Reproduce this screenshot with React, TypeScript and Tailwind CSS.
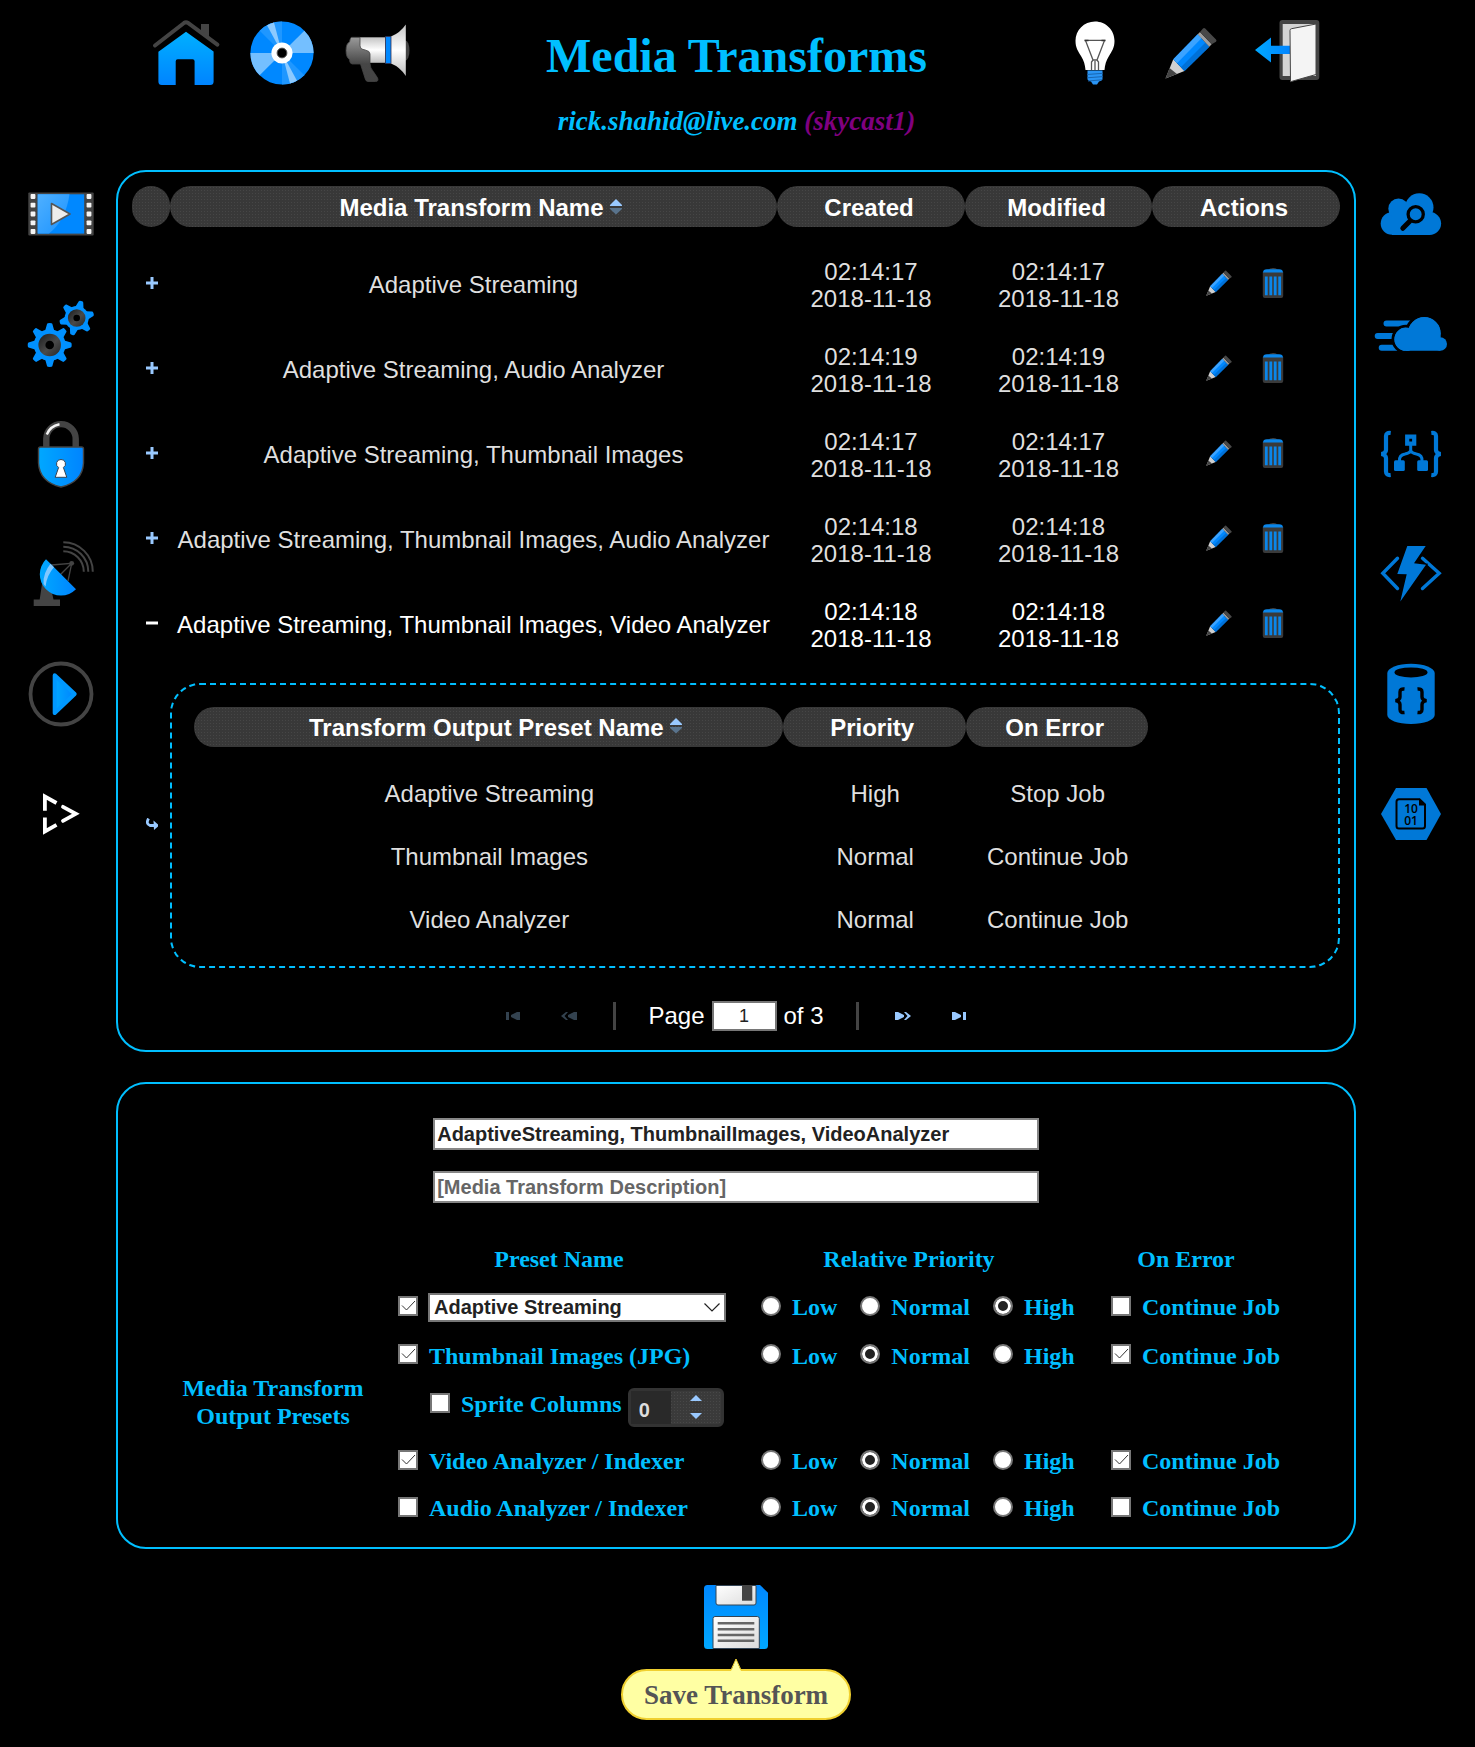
import React from "react";

const SVG_CLASS = "block size-16 overflow-visible";

function Gradients() {
  return (
    <svg className="absolute size-0" aria-hidden="true">
      <defs>
        <linearGradient id="blueDown" x1="0" y1="0" x2="0" y2="1">
          <stop offset="0" stopColor="#00b0ff" />
          <stop offset="1" stopColor="#0084ff" />
        </linearGradient>
        <linearGradient id="blueUp" x1="0" y1="1" x2="0" y2="0">
          <stop offset="0" stopColor="#00a8ff" />
          <stop offset="1" stopColor="#0088ff" />
        </linearGradient>
        <linearGradient id="blueRight" x1="0" y1="0" x2="1" y2="0">
          <stop offset="0" stopColor="#00a8ff" />
          <stop offset="1" stopColor="#0084ff" />
        </linearGradient>
        <linearGradient id="silver" x1="0" y1="0" x2="0" y2="1">
          <stop offset="0" stopColor="#c4c4c4" />
          <stop offset="0.5" stopColor="#ffffff" />
          <stop offset="1" stopColor="#bdbdbd" />
        </linearGradient>
        <linearGradient id="steel" x1="0" y1="0" x2="0" y2="1">
          <stop offset="0" stopColor="#9a9a9a" />
          <stop offset="0.6" stopColor="#464646" />
          <stop offset="1" stopColor="#444444" />
        </linearGradient>
        <linearGradient id="plate" x1="0" y1="0" x2="1" y2="1">
          <stop offset="0" stopColor="#ffffff" />
          <stop offset="1" stopColor="#dcdcdc" />
        </linearGradient>
        <linearGradient id="hub" x1="0" y1="0" x2="1" y2="1">
          <stop offset="0" stopColor="#1c1c1c" />
          <stop offset="0.55" stopColor="#4a4a4a" />
          <stop offset="1" stopColor="#262626" />
        </linearGradient>
        <linearGradient id="gloss" x1="0" y1="0" x2="1" y2="1">
          <stop offset="0" stopColor="#4fb0ff" />
          <stop offset="1" stopColor="#1a92ff" />
        </linearGradient>
      </defs>
    </svg>
  );
}

function HomeIcon() {
  return (
    <svg viewBox="0 0 64 64" className={SVG_CLASS} aria-hidden="true">
      <path d="M47 3h8v14l-8-6z" fill="#444" />
      <path d="M1 24.5 30 2q2-1.4 4 0l29.4 21.6" fill="none" stroke="#444" strokeWidth="4" strokeLinecap="round" />
      <path d="M32 10.7 59.6 30.5V60.5a3.5 3.5 0 0 1-3.5 3.5H40.6V40.3a2 2 0 0 0-2-2H23.7a2 2 0 0 0-2 2V64H8a3.5 3.5 0 0 1-3.6-3.5V30.7z" fill="url(#blueDown)" />
    </svg>
  );
}

function DiscIcon() {
  return (
    <svg viewBox="0 0 64 64" className={SVG_CLASS} aria-hidden="true">
      <circle cx="32" cy="32" r="31.6" fill="#0088ff" />
      <path d="M32 32 54.3 9.7A31.6 31.6 0 0 1 63.6 32z" fill="#74bfff" />
      <path d="M32 32 9.7 54.3A31.6 31.6 0 0 1 .4 32z" fill="#74bfff" />
      <path d="M32 32 9.7 9.7A31.6 31.6 0 0 1 32 .4z" fill="#1f97ff" />
      <path d="M32 32 54.3 54.3A31.6 31.6 0 0 1 32 63.6z" fill="#1f97ff" />
      <path d="M32 32 17 4.2A31.6 31.6 0 0 1 24 1.5z" fill="#8ccaff" />
      <path d="M32 32 47 59.8A31.6 31.6 0 0 1 40 62.5z" fill="#8ccaff" />
      <circle cx="32" cy="32" r="10.6" fill="#fff" />
      <circle cx="32" cy="32" r="4.9" fill="#000" stroke="#555" strokeWidth="1" />
    </svg>
  );
}

function MegaphoneIcon() {
  return (
    <svg viewBox="0 0 64 64" className={SVG_CLASS} aria-hidden="true">
      <ellipse cx="59.5" cy="29.5" rx="4" ry="10" fill="#444" />
      <path d="M14 16.3H39.5V41.8H14z" fill="url(#silver)" />
      <path d="M45 15.5Q54 12 59.8 3.5V55Q54 46 45 42.5z" fill="url(#silver)" />
      <path d="M39.500 15.5h5.500v27H39.500z" fill="#0088ff" stroke="#335" strokeWidth=".8" />
      <path d="M5.500 16.300H14v8q0 4 5 4.600 5 1 5 4V42.300q0 5 3.500 8.500l4 6q1.500 3.700-2 3.700h-7.500q-2 0-2.700-2.500L14.500 43H6q-2.500-.5-2.500-4.500-3.500-2-3.500-9t3.500-8.500q.5-4 2-4.700z" fill="url(#steel)" stroke="#444" strokeWidth=".8" />
    </svg>
  );
}

function BulbIcon() {
  return (
    <svg viewBox="0 0 64 64" className={SVG_CLASS} aria-hidden="true">
      <path d="M32 .4c11 0 19.500 8.600 19.500 19.300 0 7-2.500 10.300-5.500 15.300-3 4.500-4 9-4.500 14h-19c-.5-5-1.500-9.500-4.500-14-3-5-5.500-8.300-5.500-15.300C12.500 9 21 .4 32 .4z" fill="#fff" />
      <path d="M22.500 19.400h19L34 39h-4zM28.500 49V41l1.500-2h4l1.500 2v8M32 40v9" fill="none" stroke="#555" strokeWidth="1.300" />
      <path d="M21.500 19.400h4M38.500 19.400h4" stroke="#333" strokeWidth="1.500" />
      <path d="M24.500 49.500h15v9q-1 1.500-3.500 2l-2 3h-4l-2-3q-2.500-.5-3.500-2z" fill="#2a94f4" />
      <path d="M24 53.500l16-1.200M24 56.800l16-1.200M25 60l14-1.200" stroke="#1560a8" strokeWidth=".9" />
    </svg>
  );
}

function PencilIcon({ small = false }: { small?: boolean }) {
  return (
    <svg viewBox="0 0 64 64" className={small ? "block size-8" : SVG_CLASS} aria-hidden="true">
      <path d="M14.300 38.300 25.500 50 6.500 57.500z" fill="#d0d0d0" />
      <path d="M10.500 47 18 53 6.500 57.500z" fill="#444" />
      <path d="M14.300 38.300 38.700 13.300 50.300 25.700 25.500 50z" fill="#0088ff" />
      <path d="M14.300 38.300 38.700 13.300 42.500 17.300 18 42.200z" fill="#3ba3ff" />
      <path d="M21.800 46.200 46.500 21.600 50.300 25.700 25.500 50z" fill="#0071d8" />
      <path d="M38.700 13.300 41 11 52.700 23.300 50.300 25.700z" fill="#a0a0a0" />
      <path d="M41 11 44 7.500q1-1 2.200 0L57 18.500q1 1 0 2.200L52.700 23.300z" fill="#484848" />
    </svg>
  );
}

function ExitIcon() {
  return (
    <svg viewBox="0 0 64 64" className={SVG_CLASS} aria-hidden="true">
      <rect x="24.500" y="-1" width="39.800" height="60" rx="3" fill="#444" />
      <path d="M27.700 3H61V55H27.700z" fill="#d4d4d4" />
      <path d="M0 29 16 16.500v8.200h19V33H16v8.500z" fill="url(#blueRight)" />
      <path d="M35 9.500q0-1.500 1.500-1.800L61 3V53.500L35.500 60.700z" fill="#f4f4f4" stroke="#444" strokeWidth="1" />
    </svg>
  );
}

function FilmIcon() {
  const holes = [14.5, 23.2, 32, 40.8, 49.5];
  return (
    <svg viewBox="0 0 64 64" className={SVG_CLASS} aria-hidden="true">
      <rect x="-.7" y="10.500" width="65.400" height="43" rx="1" fill="#444" />
      <rect x="8.700" y="12.300" width="46.500" height="39.300" fill="#0088ff" />
      <path d="M8.700 12.300H40.500Q37 38 20 51.600H8.700z" fill="url(#gloss)" />
      {holes.map((y) => (
        <g key={y} fill="#f4f4f4">
          <rect x="1.600" y={y - 2.4} width="4.800" height="4.800" rx=".8" />
          <rect x="57.600" y={y - 2.4} width="4.800" height="4.800" rx=".8" />
        </g>
      ))}
      <path d="M22.500 21.500 41 32 22.500 42.500z" fill="#ececec" stroke="#555" strokeWidth="1.600" strokeLinejoin="round" />
    </svg>
  );
}

function Gear({ cx, cy, r, body, hub, hole, teeth, turn, tooth }: {
  cx: number; cy: number; r: number; body: number; hub: number; hole: number; teeth: number; turn: number; tooth: number;
}) {
  return (
    <g transform={`translate(${cx} ${cy})`}>
      {Array.from({ length: teeth }, (_, i) => (
        <path
          key={i}
          d={`M${-tooth - 1.5} ${-body + 2}L${-tooth + 0.6} ${-r + 0.8}Q${-tooth + 0.8} ${-r} 0 ${-r}Q${tooth - 0.8} ${-r} ${tooth - 0.6} ${-r + 0.8}L${tooth + 1.5} ${-body + 2}z`}
          fill="#0090ff"
          transform={`rotate(${turn + (i * 360) / teeth})`}
        />
      ))}
      <circle r={body} fill="#0090ff" />
      <circle r={hub} fill="url(#hub)" />
      <circle r={hole} fill="#000" />
    </g>
  );
}

function GearsIcon() {
  return (
    <svg viewBox="0 0 64 64" className={SVG_CLASS} aria-hidden="true">
      <Gear cx={20.7} cy={43} r={22} body={15.8} hub={11.3} hole={4.3} teeth={8} turn={0} tooth={3.2} />
      <Gear cx={47.7} cy={16} r={17.5} body={12} hub={8.8} hole={3.3} teeth={6} turn={15} tooth={2.9} />
    </svg>
  );
}

function LockIcon() {
  return (
    <svg viewBox="0 0 64 64" className={SVG_CLASS} aria-hidden="true">
      <path d="M17.300 26V16.800a14.700 14.700 0 0 1 29.400 0V26" fill="none" stroke="#444" strokeWidth="6.400" />
      <path d="M17.800 12.500Q21 4 30.500 2.200" fill="none" stroke="#f4f4f4" strokeWidth="2.400" />
      <path d="M11.500 25H52.500Q54.500 25 54.500 27V41Q53.500 60 32 65 10.500 60 9.500 41V27Q9.500 25 11.500 25z" fill="url(#blueRight)" stroke="#444" strokeWidth="1.400" />
      <path d="M32 37.500a4.300 4.300 0 0 1 2.400 8L37.800 55.300H26.200L29.600 45.500a4.300 4.300 0 0 1 2.400-8z" fill="#fff" stroke="#345" strokeWidth="1" />
    </svg>
  );
}

function SatelliteIcon() {
  return (
    <svg viewBox="0 0 64 64" className={SVG_CLASS} aria-hidden="true">
      <path d="M13 42H21L24.500 57.500H31V64H4.700V57.500H10.700z" fill="#444" />
      <path d="M22.500 23 42.700 21.300 31 33M42.700 21.300 39 39" fill="none" stroke="#444" strokeWidth="1.300" />
      <circle cx="42.700" cy="21.300" r="2.400" fill="#444" />
      <path d="M17 17.300A21.200 21.200 0 0 0 47 47.300z" fill="url(#blueRight)" />
      <path d="M21.500 21.800 25 25.300Q18 33 16.500 44.500L14.500 42Q14 31 21.500 21.800z" fill="#80c8ff" />
      <path d="M34.300.2A29.500 29.500 0 0 1 63.800 29.700M34.300 4.700A25 25 0 0 1 59.300 29.700M34.300 9.200A20.500 20.500 0 0 1 54.800 29.700" fill="none" stroke="#444" strokeWidth="2" />
    </svg>
  );
}

function PlayIcon() {
  return (
    <svg viewBox="0 0 64 64" className={SVG_CLASS} aria-hidden="true">
      <circle cx="32" cy="32" r="30.500" fill="none" stroke="#444" strokeWidth="3.800" />
      <path d="M25.700 13.300 45.700 32 25.700 51z" fill="url(#blueRight)" stroke="#0098ff" strokeWidth="4" strokeLinejoin="round" />
    </svg>
  );
}

function SegmentsIcon() {
  return (
    <svg viewBox="0 0 64 64" className={SVG_CLASS} aria-hidden="true">
      <g fill="none" stroke="#fff" strokeWidth="3.800">
        <path d="M15.900 28.700V14.500L27.500 21" />
        <path d="M15.900 35.500V49.500L27.500 42.800" />
        <path d="M34 24.800 46.800 31.800 34 38.900" strokeLinecap="round" />
      </g>
    </svg>
  );
}

function CloudSearchIcon() {
  return (
    <svg viewBox="0 0 64 64" className={SVG_CLASS} aria-hidden="true">
      <g fill="#0078d7">
        <circle cx="13" cy="41.500" r="11.300" />
        <circle cx="19.500" cy="26.800" r="10.200" />
        <circle cx="40.300" cy="25.500" r="14.200" />
        <circle cx="50.700" cy="41.500" r="11.400" />
        <path d="M13 26H51V53H13z" />
      </g>
      <path d="M31 39 23.800 46.300" stroke="#000" strokeWidth="5" strokeLinecap="round" />
      <circle cx="36.700" cy="32.300" r="7.600" fill="none" stroke="#000" strokeWidth="3.300" />
    </svg>
  );
}

function FastCloudIcon() {
  return (
    <svg viewBox="0 0 64 64" className={SVG_CLASS} aria-hidden="true">
      <g fill="#0078d7">
        <path d="M7.500 18.500H32L28 24.500H7.500a3 3 0 0 1 0-6zM-1.300 31H14.500L13 37H-1.300a3 3 0 0 1 0-6zM2.700 42.700H15L18.500 48.700H2.700a3 3 0 0 1 0-6z" />
      </g>
      <g fill="#0078d7" stroke="#000" strokeWidth="3">
        <circle cx="27" cy="37.300" r="13" />
        <circle cx="45.300" cy="31.500" r="17.800" />
      </g>
      <g fill="#0078d7">
        <circle cx="27" cy="37.200" r="11.600" />
        <circle cx="45.300" cy="31.500" r="16.400" />
        <circle cx="61.300" cy="42" r="6.700" />
        <path d="M27 34H61.300V48.700H27z" />
      </g>
    </svg>
  );
}

function LogicIcon() {
  return (
    <svg viewBox="0 0 64 64" className={SVG_CLASS} aria-hidden="true">
      <g fill="none" stroke="#0078d7" strokeWidth="4.200">
        <path d="M11.700 11Q7 10.500 7 14V28Q7 31 2.500 32 7 33 7 36V49.500Q7 53.500 11.700 53" />
        <path d="M52.300 11Q57 10.500 57 14V28Q57 31 61.500 32 57 33 57 36V49.500Q57 53.500 52.300 53" />
        <path d="M28.200 14.600H35.200V21.700H28.200z" />
        <path d="M31.700 23V30.500M20.500 39Q20 33 26 32 31 31 31.700 28.500 32.500 31 37.500 32 43.500 33 43 39" strokeWidth="3" />
      </g>
      <rect x="15" y="38.300" width="10.800" height="10.800" rx="1.500" fill="#0078d7" />
      <rect x="38.200" y="38.300" width="10.800" height="10.800" rx="1.500" fill="#0078d7" />
    </svg>
  );
}

function FunctionIcon() {
  return (
    <svg viewBox="0 0 64 64" className={SVG_CLASS} aria-hidden="true">
      <path d="M18.500 16.300 3.800 31.300 18.500 46.500M43.500 16.300 60.200 31.300 43.500 46.500" fill="none" stroke="#0078d7" strokeWidth="3.400" strokeLinecap="round" />
      <path d="M28.300 4H46.700L35 21.300 47 22.700 21.300 59.500 27.700 32.300 18.300 32z" fill="#0078d7" stroke="#000" strokeWidth="2.500" paintOrder="stroke" />
    </svg>
  );
}

function DatabaseIcon() {
  return (
    <svg viewBox="0 0 64 64" className={SVG_CLASS} aria-hidden="true">
      <path d="M8.300 11C8.300 6 19 1.700 32 1.700S55.700 6 55.700 11V53C55.700 58 45 62 32 62S8.300 58 8.300 53z" fill="#0078d7" />
      <ellipse cx="32" cy="10.400" rx="16.500" ry="5" fill="#000" />
      <g fill="none" stroke="#000" strokeWidth="3.400">
        <path d="M25.500 27Q21 26.500 21 30V35Q21 38 16.500 38.700 21 39.500 21 42.500V47.500Q21 51 25.500 50.500" />
        <path d="M38.500 27Q43 26.500 43 30V35Q43 38 47.500 38.700 43 39.500 43 42.500V47.500Q43 51 38.500 50.500" />
      </g>
    </svg>
  );
}

function StorageIcon() {
  return (
    <svg viewBox="0 0 64 64" className={SVG_CLASS} aria-hidden="true">
      <path d="M2 32 17 6H47.500L62 32 47.500 58H17z" fill="#0078d7" />
      <path d="M40.500 17.300H20a2.500 2.500 0 0 0-2.500 2.500V44a2.500 2.500 0 0 0 2.500 2.500H43.500A2.500 2.500 0 0 0 46 44V22.500z" fill="none" stroke="#000" strokeWidth="2" />
      <path d="M40 16.500 46.800 23.500H40z" fill="#000" />
      <text textAnchor="middle" fontFamily="Open Sans, Noto Sans, sans-serif" fontSize="12" fontWeight="600" fill="#000">
        <tspan x="32" y="30.500">10</tspan>
        <tspan x="32" y="42.500">01</tspan>
      </text>
    </svg>
  );
}

function FloppyIcon() {
  return (
    <svg viewBox="0 0 64 64" className={SVG_CLASS} aria-hidden="true">
      <path d="M3.500 0H56L64 7.700V60.500A3.500 3.500 0 0 1 60.500 64H3.500A3.500 3.500 0 0 1 0 60.500V3.500A3.500 3.500 0 0 1 3.500 0z" fill="url(#blueUp)" />
      <path d="M12 .5H52V18a2 2 0 0 1-2 2H14a2 2 0 0 1-2-2z" fill="url(#plate)" stroke="#345" strokeWidth="1" />
      <path d="M38 0H48.300V15.700H38z" fill="#444" />
      <path d="M9 33.500a2 2 0 0 1 2-2H53.300a2 2 0 0 1 2 2V63.500H9z" fill="url(#plate)" stroke="#345" strokeWidth="1" />
      <path d="M13.700 38.300H50.300M13.700 44.200H50.300M13.700 50H50.300M13.700 55.700H50.300" stroke="#666" strokeWidth="2.400" />
    </svg>
  );
}

function TrashIcon() {
  return (
    <svg viewBox="0 0 32 32" className="block size-8" aria-hidden="true">
      <path d="M11 2.500Q16 0 21 2.500z" fill="#555" />
      <path d="M5.800 5H26.200V29a2 2 0 0 1-2 2H7.800a2 2 0 0 1-2-2z" fill="#3a3a3a" />
      <path d="M6 5.500Q6 2.300 10 2.200H22Q26 2.300 26 5.500z" fill="#0a86ea" />
      <path d="M9.300 9.500V28.300M13.800 9.500V28.300M18.200 9.500V28.300M22.700 9.500V28.300" stroke="#0a86ea" strokeWidth="2.800" />
    </svg>
  );
}

function SortIcon() {
  return (
    <svg viewBox="0 0 12 16" className="mb-0.5 ml-1.5 block h-4 w-3" aria-hidden="true">
      <path d="M6 0 12 6V7H0V6z" fill="#99c9ff" />
      <path d="M6 15.500 12 10V9H0V10z" fill="#59738c" />
    </svg>
  );
}

const HEAD =
  "grid grid-cols-[1fr_auto_1fr] items-center rounded-full bg-[#383838] bg-[radial-gradient(#464646_1px,transparent_1px)] [background-size:3px_3px] pr-1 mb-[15px] font-bold text-white";

function HeadCell({ label, sort = false, inner = false }: { label: string; sort?: boolean; inner?: boolean }) {
  return (
    <th scope="col" className="p-0">
      <div className={`${HEAD} ${inner ? "h-10" : "h-[41px] pt-0.5"}`}>
        <span />
        <span>{label}</span>
        {sort ? <SortIcon /> : <span />}
      </div>
    </th>
  );
}

const transforms = [
  { name: "Adaptive Streaming", time: "02:14:17" },
  { name: "Adaptive Streaming, Audio Analyzer", time: "02:14:19" },
  { name: "Adaptive Streaming, Thumbnail Images", time: "02:14:17" },
  { name: "Adaptive Streaming, Thumbnail Images, Audio Analyzer", time: "02:14:18" },
  { name: "Adaptive Streaming, Thumbnail Images, Video Analyzer", time: "02:14:18", open: true },
];

const outputs = [
  ["Adaptive Streaming", "High", "Stop Job"],
  ["Thumbnail Images", "Normal", "Continue Job"],
  ["Video Analyzer", "Normal", "Continue Job"],
];

function DateCell({ time }: { time: string }) {
  return (
    <td>
      {time}
      <br />
      2018-11-18
    </td>
  );
}

function TransformTable() {
  return (
    <table className="w-full table-fixed border-collapse text-center text-[24px] leading-[27px] text-[#dfdfdf]">
      <colgroup>
        <col className="w-[38px]" />
        <col />
        <col className="w-[188px]" />
        <col className="w-[187px]" />
        <col className="w-[188px]" />
      </colgroup>
      <thead>
        <tr>
          <HeadCell label="" />
          <HeadCell label="Media Transform Name" sort />
          <HeadCell label="Created" />
          <HeadCell label="Modified" />
          <HeadCell label="Actions" />
        </tr>
      </thead>
      <tbody>
        {transforms.map((row) => (
          <tr key={row.name} className={row.open ? "h-[85px] text-white" : "h-[85px]"}>
            <td className="pb-1 pl-0.5">
              <button type="button" aria-label={row.open ? "Collapse" : "Expand"} className="block w-full">
                <svg viewBox="0 0 12 12" className="mx-auto block size-3" aria-hidden="true">
                  <path d={row.open ? "M0 6H12" : "M0 6H12M6 0V12"} stroke={row.open ? "#fff" : "#99c9ff"} strokeWidth="3" />
                </svg>
              </button>
            </td>
            <td className="whitespace-nowrap">{row.name}</td>
            <DateCell time={row.time} />
            <DateCell time={row.time} />
            <td className="pb-1">
              <div className="flex justify-center gap-[22px]">
                <button type="button" aria-label="Edit">
                  <PencilIcon small />
                </button>
                <button type="button" aria-label="Delete">
                  <TrashIcon />
                </button>
              </div>
            </td>
          </tr>
        ))}
        <tr>
          <td className="pt-3 pl-0.5">
            <svg viewBox="0 0 12 12" className="mx-auto block size-3" aria-hidden="true">
              <path d="M2.500.5Q-.5 6 4 7.500H8" fill="none" stroke="#99c9ff" strokeWidth="2.800" />
              <path d="M7.500 2.500 12 6.500V8.500L8 12z" fill="#99c9ff" />
            </svg>
          </td>
          <td colSpan={4} className="pt-4">
            <div className="rounded-[30px] border-2 border-dashed border-[#00bfff] px-[22px] pt-[22px] pb-[15px]">
              <table className="w-[85%] table-fixed border-collapse">
                <colgroup>
                  <col />
                  <col className="w-[183px]" />
                  <col className="w-[182px]" />
                </colgroup>
                <thead>
                  <tr>
                    <HeadCell label="Transform Output Preset Name" sort inner />
                    <HeadCell label="Priority" inner />
                    <HeadCell label="On Error" inner />
                  </tr>
                </thead>
                <tbody>
                  {outputs.map((cells) => (
                    <tr key={cells[0]} className="h-[63px]">
                      {cells.map((cell) => (
                        <td key={cell} className="pl-0.5">{cell}</td>
                      ))}
                    </tr>
                  ))}
                </tbody>
              </table>
            </div>
          </td>
        </tr>
      </tbody>
    </table>
  );
}

function PagerButton({ label, d, disabled = false }: { label: string; d: string; disabled?: boolean }) {
  return (
    <button type="button" aria-label={label} disabled={disabled} className="w-6">
      <svg viewBox="0 0 16 10" className="mx-auto block h-2.5 w-4" aria-hidden="true">
        <path d={d} fill={disabled ? "#33424f" : "#99c9ff"} />
      </svg>
    </button>
  );
}

function Pager() {
  return (
    <div className="mt-[33px] mb-[5px] flex h-[30px] items-center justify-center gap-8 text-[24px] leading-7 text-white">
      <PagerButton label="First page" d="M1 1H4V9H1zM15 1V9H12L6 6V4L12 1z" disabled />
      <PagerButton label="Previous page" d="M7 1 3.500 5 7 9H5L0 5 5 1zM16 1V9H13L7 6V4L13 1z" disabled />
      <span className="h-7 w-[3px] bg-[#444]" />
      <label className="flex items-center gap-[7px]">
        Page
        <input
          defaultValue="1"
          className="h-[30px] w-[65px] border-2 border-[#767676] bg-white text-center text-[18px] text-[#222]"
        />
        of 3
      </label>
      <span className="h-7 w-[3px] bg-[#444]" />
      <PagerButton label="Next page" d="M0 1V9H3L9 6V4L3 1zM9 1 12.500 5 9 9H11L16 5 11 1z" />
      <PagerButton label="Last page" d="M1 1V9H4L10 6V4L4 1zM12 1H15V9H12z" />
    </div>
  );
}

function Check({ label, checked = false }: { label: string; checked?: boolean }) {
  return (
    <label className="flex items-center gap-[11px] whitespace-nowrap">
      <Box checked={checked} />
      {label}
    </label>
  );
}

function Box({ checked = false, label }: { checked?: boolean; label?: string }) {
  return (
    <span className="relative mb-[3px] block size-5 shrink-0">
      <input
        type="checkbox"
        aria-label={label}
        defaultChecked={checked}
        className="peer block size-5 appearance-none border-2 border-[#767676] bg-white"
      />
      <svg viewBox="0 0 20 20" className="pointer-events-none absolute inset-0 hidden size-5 peer-checked:block" aria-hidden="true">
        <path d="M4 9.500 8.500 14 17 5" fill="none" stroke="#333" strokeWidth="1" />
      </svg>
    </span>
  );
}

function Priority({ name, value }: { name: string; value: string }) {
  return (
    <div role="radiogroup" aria-label="Relative Priority" className="flex items-center gap-[23px] pl-[19px]">
      {["Low", "Normal", "High"].map((option) => (
        <label key={option} className="flex items-center gap-[11px]">
          <input
            type="radio"
            name={name}
            defaultChecked={option === value}
            className="mb-[3px] block size-5 appearance-none rounded-full border-2 border-[#767676] bg-white shadow-[inset_0_0_0_3px_#fff] checked:bg-[#222]"
          />
          {option}
        </label>
      ))}
    </div>
  );
}

const ROW = "grid grid-cols-[334px_334px_188px] items-center gap-x-4";

function PresetRow({ id, value, skip = false, className, children }: {
  id: string; value: string; skip?: boolean; className: string; children: React.ReactNode;
}) {
  return (
    <div className={`${ROW} ${className}`}>
      <div className="pl-1.5">{children}</div>
      <Priority name={id} value={value} />
      <div className="pl-[19px]">
        <Check label="Continue Job" checked={skip} />
      </div>
    </div>
  );
}

const FIELD =
  "block h-8 w-[49%] border-2 border-[#868686] bg-white px-0.5 text-[20px] font-bold text-[#222] placeholder:text-[#666]";

function TransformForm() {
  return (
    <form className="rounded-[30px] border-2 border-[#00bfff] pt-[34px] pb-[15px]">
      <div className="flex flex-col items-center gap-[21px]">
        <input aria-label="Media Transform Name" defaultValue="AdaptiveStreaming, ThumbnailImages, VideoAnalyzer" className={FIELD} />
        <input aria-label="Media Transform Description" placeholder="[Media Transform Description]" className={FIELD} />
      </div>
      <div className="mt-8 flex items-center justify-center pr-[38px] font-['Liberation_Serif',serif] text-[24px] leading-7 font-bold text-[#00bfff]">
        <div className="w-[238px] pt-9 text-center">
          Media Transform
          <br />
          Output Presets
        </div>
        <div>
          <div className={`${ROW} h-12 text-center`}>
            <span>Preset Name</span>
            <span>Relative Priority</span>
            <span>On Error</span>
          </div>
          <PresetRow id="adaptive" value="High" className="h-12">
            <div className="flex items-center gap-2.5">
              <Box checked label="Adaptive Streaming" />
              <div className="relative grow">
                <select
                  aria-label="Streaming preset"
                  className="block h-[29px] w-full appearance-none border-2 border-[#767676] bg-white px-1 font-['Liberation_Sans',sans-serif] text-[20px] leading-6 font-bold text-[#222]"
                >
                  <option>Adaptive Streaming</option>
                </select>
                <svg viewBox="0 0 16 9" className="pointer-events-none absolute top-2.5 right-1.5 h-[9px] w-4" aria-hidden="true">
                  <path d="M.5.5 8 8 15.500.5" fill="none" stroke="#222" strokeWidth="1.200" />
                </svg>
              </div>
            </div>
          </PresetRow>
          <PresetRow id="thumbnail" value="Normal" skip className="h-[49px]">
            <Check label="Thumbnail Images (JPG)" checked />
          </PresetRow>
          <div className="flex h-[58px] items-start gap-1.5 pt-1.5 pl-[38px]">
            <div className="pt-1">
              <Check label="Sprite Columns" />
            </div>
            <div className="mt-0.5 flex h-[39px] w-24 rounded-md border-[3px] border-[#333] bg-[#3a3a3a] bg-[radial-gradient(#484848_1px,transparent_1px)] [background-size:3px_3px]">
              <input
                aria-label="Sprite Columns count"
                defaultValue="0"
                className="w-10 bg-[#292929] pt-1 pl-2 font-['Liberation_Sans',sans-serif] text-[20px] font-bold text-[#ddd]"
              />
              <div className="flex grow flex-col items-center justify-center gap-3 pb-0.5">
                <button type="button" aria-label="Increase">
                  <svg viewBox="0 0 12 6" className="block h-1.5 w-3" aria-hidden="true">
                    <path d="M6 0 12 6H0z" fill="#99c9ff" />
                  </svg>
                </button>
                <button type="button" aria-label="Decrease">
                  <svg viewBox="0 0 12 6" className="block h-1.5 w-3" aria-hidden="true">
                    <path d="M6 6 12 0H0z" fill="#99c9ff" />
                  </svg>
                </button>
              </div>
            </div>
          </div>
          <PresetRow id="video" value="Normal" skip className="h-[46px]">
            <Check label="Video Analyzer / Indexer" checked />
          </PresetRow>
          <PresetRow id="audio" value="Normal" className="h-12">
            <Check label="Audio Analyzer / Indexer" />
          </PresetRow>
        </div>
      </div>
    </form>
  );
}

function IconLinks({ items, className }: { items: [string, () => React.JSX.Element][]; className: string }) {
  return (
    <nav className={className}>
      {items.map(([label, Icon]) => (
        <a key={label} href="#" aria-label={label}>
          <Icon />
        </a>
      ))}
    </nav>
  );
}

export default function App() {
  return (
    <div className="min-h-screen bg-black pr-[3px] pb-[27px] font-['Liberation_Sans',Arial,sans-serif]">
      <Gradients />
      <div className="grid grid-cols-[116px_minmax(0,1fr)_116px]">
        <header className="col-start-2 flex h-[170px] items-start justify-between pt-[21px] pr-[37px] pl-[38px]">
          <IconLinks
            className="flex gap-8"
            items={[["Home", HomeIcon], ["Media", DiscIcon], ["Announcements", MegaphoneIcon]]}
          />
          <div className="pt-[7px] text-center font-['Liberation_Serif',serif] font-bold text-[#00bfff]">
            <h1 className="text-[48px] leading-[56px]">Media Transforms</h1>
            <p className="mt-5 text-[27px] leading-[34px] italic">
              rick.shahid@live.com <span className="text-[#800080]">(skycast1)</span>
            </p>
          </div>
          <IconLinks className="flex gap-8" items={[["Ideas", BulbIcon], ["Edit profile", () => <PencilIcon />], ["Sign out", ExitIcon]]} />
        </header>

        <IconLinks
          className="col-start-1 flex flex-col items-center gap-14 pt-3 pl-1.5"
          items={[
            ["Streaming", FilmIcon],
            ["Jobs", GearsIcon],
            ["Protection", LockIcon],
            ["Live", SatelliteIcon],
            ["Player", PlayIcon],
            ["Clips", SegmentsIcon],
          ]}
        />

        <main>
          <section className="rounded-[30px] border-2 border-[#00bfff] p-[14px]">
            <TransformTable />
            <Pager />
          </section>
          <div className="mt-[30px]">
            <TransformForm />
          </div>
          <div className="mt-9 flex flex-col items-center">
            <button type="button" aria-label="Save">
              <FloppyIcon />
            </button>
            <div
              role="tooltip"
              className="relative mt-5 rounded-full border-2 border-[#f0d030] bg-[#ffffa3] px-[21px] pt-[9px] pb-[7px] font-['Liberation_Serif',serif] text-[27px] leading-[31px] font-bold text-[#555]"
            >
              <svg viewBox="0 0 10 12" className="absolute -top-3 left-1/2 h-3 w-2.5 -translate-x-1/2" aria-hidden="true">
                <path d="M0 12 5 0 10 12z" fill="#ffffa3" />
                <path d="M0 11 5 0 10 11" fill="none" stroke="#f0d030" strokeWidth="1" />
              </svg>
              Save Transform
            </div>
          </div>
        </main>

        <IconLinks
          className="flex flex-col items-center gap-14 pt-3 pr-1.5"
          items={[
            ["Search", CloudSearchIcon],
            ["Delivery", FastCloudIcon],
            ["Logic apps", LogicIcon],
            ["Functions", FunctionIcon],
            ["Database", DatabaseIcon],
            ["Storage", StorageIcon],
          ]}
        />
      </div>
    </div>
  );
}
